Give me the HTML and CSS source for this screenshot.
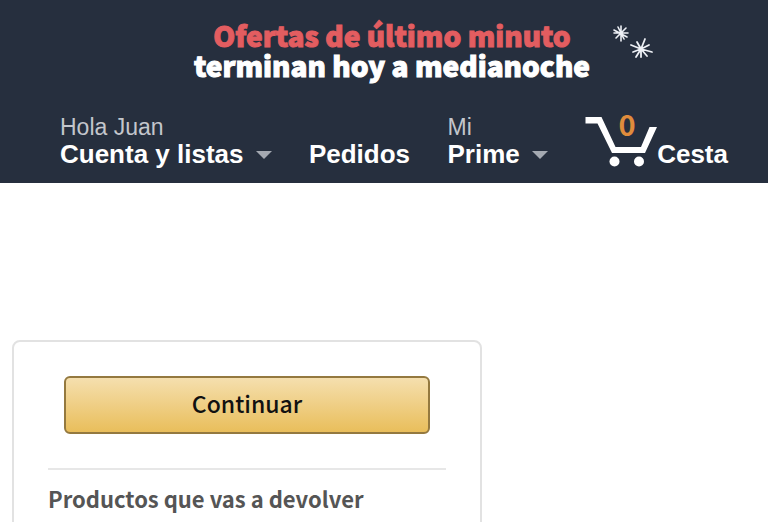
FILE: index.html
```html
<!DOCTYPE html>
<html lang="es">
<head>
    <meta charset="UTF-8">
    <meta name="viewport" content="width=device-width, initial-scale=1.0">
    <title>Devoluciones</title>
    <link rel="stylesheet" href="styles.css">
</head>
<body>
    <header>
        <a class="promo" href="#ofertas">
            <span class="promo-text">
                <span class="promo-title">Ofertas de último minuto</span>
                <span class="promo-subtitle">terminan hoy a medianoche</span>
            </span>
            <svg class="promo-stars" width="42" height="38" viewBox="0 0 42 38" aria-hidden="true">
                <path d="M9 2v15M2 6l13 7M4 14L14 4M2 9h14M6 3l6 12" stroke-width="1.600"/>
                <path d="M29 25L33 15M29 25l-4-7M29 25l-10-4M29 25l11 3M29 25l8-4M29 25l-8 3M29 25l-5 8M29 25v8M29 25l6 7" stroke-width="1.800"/>
            </svg>
        </a>
        <nav class="nav-links">
            <a href="#cuenta">
                <span class="nav-line-1">Hola Juan</span>
                <span class="nav-line-2 nav-arrow">Cuenta y listas</span>
            </a>
            <a href="#pedidos">
                <span class="nav-line-2">Pedidos</span>
            </a>
            <a href="#prime">
                <span class="nav-line-1">Mi</span>
                <span class="nav-line-2 nav-arrow">Prime</span>
            </a>
            <a class="nav-cart" href="#cesta">
                <span class="cart-icon">
                    <svg width="72" height="52" viewBox="0 0 72 52" aria-hidden="true">
                        <path d="M0.500 0H16.500L30.500 30H56L64.500 10H72L60 36H27L12.500 6.500H0.500Z" fill="#fff"/>
                        <circle cx="29.500" cy="44.500" r="5" fill="#fff"/>
                        <circle cx="54" cy="44.500" r="5" fill="#fff"/>
                    </svg>
                    <span class="cart-count">0</span>
                </span>
                <span class="nav-line-2">Cesta</span>
            </a>
        </nav>
    </header>

    <main>
        <section class="card">
            <button class="btn-primary" type="button">Continuar</button>
            <hr>
            <h2>Productos que vas a devolver</h2>
        </section>
    </main>
</body>
</html>
```

FILE: styles.css
```css
:root{
    --navy:#262f3e;
    --red:#e35d60;
    --orange:#e08c3c;
    --muted:#c3c6cc;
    --line:#e2e2e2;
    --ember:"Noto Sans CJK SC","Noto Sans",sans-serif;
}

*{margin:0;padding:0;box-sizing:border-box;}
body{
    background:#fff;
    color:#111;
    font-family:"Liberation Sans",Arial,sans-serif;
}
a{color:inherit;text-decoration:none;}

/* ========= HEADER ========= */
header{
    background:var(--navy);
    color:#fff;
    padding-bottom:14px;
}

/* ========= PROMO ========= */
.promo{
    display:flex;
    justify-content:center;
    gap:22px;
    padding:20px 0 34px 80px;
}
.promo-text{
    display:flex;
    flex-direction:column;
    text-align:center;
    font-family:var(--ember);
    font-size:28px;
    font-weight:900;
    line-height:30px;
    -webkit-text-stroke:1px currentColor;
}
.promo-title{color:var(--red);}
.promo-stars{
    margin-top:4px;
    fill:none;
    stroke:#eef1f6;
    stroke-linecap:round;
}

/* ========= NAV ========= */
.nav-links{
    display:flex;
    justify-content:space-between;
    align-items:flex-end;
    padding:0 40px 0 60px;
}
.nav-links span{display:block;}
.nav-line-1{
    color:var(--muted);
    font-size:23px;
    line-height:26px;
}
.nav-links .nav-line-2{
    display:flex;
    align-items:center;
    font-size:26px;
    font-weight:700;
    line-height:29px;
}
.nav-arrow::after{
    content:'';
    margin-left:12px;
    border:8px solid transparent;
    border-top-color:#a4a9b1;
    border-bottom-width:0;
}
.nav-cart{display:flex;align-items:flex-end;}
.cart-icon{position:relative;}
.cart-icon svg{display:block;}
.nav-links .cart-count{
    position:absolute;
    top:-10px;
    left:0;
    width:84px;
    text-align:center;
    color:var(--orange);
    font-family:var(--ember);
    font-size:29px;
    font-weight:700;
    line-height:32px;
}

/* ========= CARD ========= */
main{padding:157px 12px 0;}
.card{
    max-width:470px;
    padding:34px 34px 40px;
    border:2px solid var(--line);
    border-radius:8px;
}
.btn-primary{
    display:block;
    width:calc(100% - 32px);
    margin:0 16px;
    padding:10px 12px 14px;
    border:2px solid #94793f;
    border-radius:6px;
    background:linear-gradient(#f5dfae,#e9be5b);
    color:#111;
    font-family:var(--ember);
    font-size:23px;
    font-weight:500;
    line-height:30px;
    cursor:pointer;
}
hr{
    margin:34px 0 14px;
    border:0;
    border-top:2px solid #e7e7e7;
}
h2{
    color:#555;
    font-family:var(--ember);
    font-size:22px;
    line-height:28px;
}
```
